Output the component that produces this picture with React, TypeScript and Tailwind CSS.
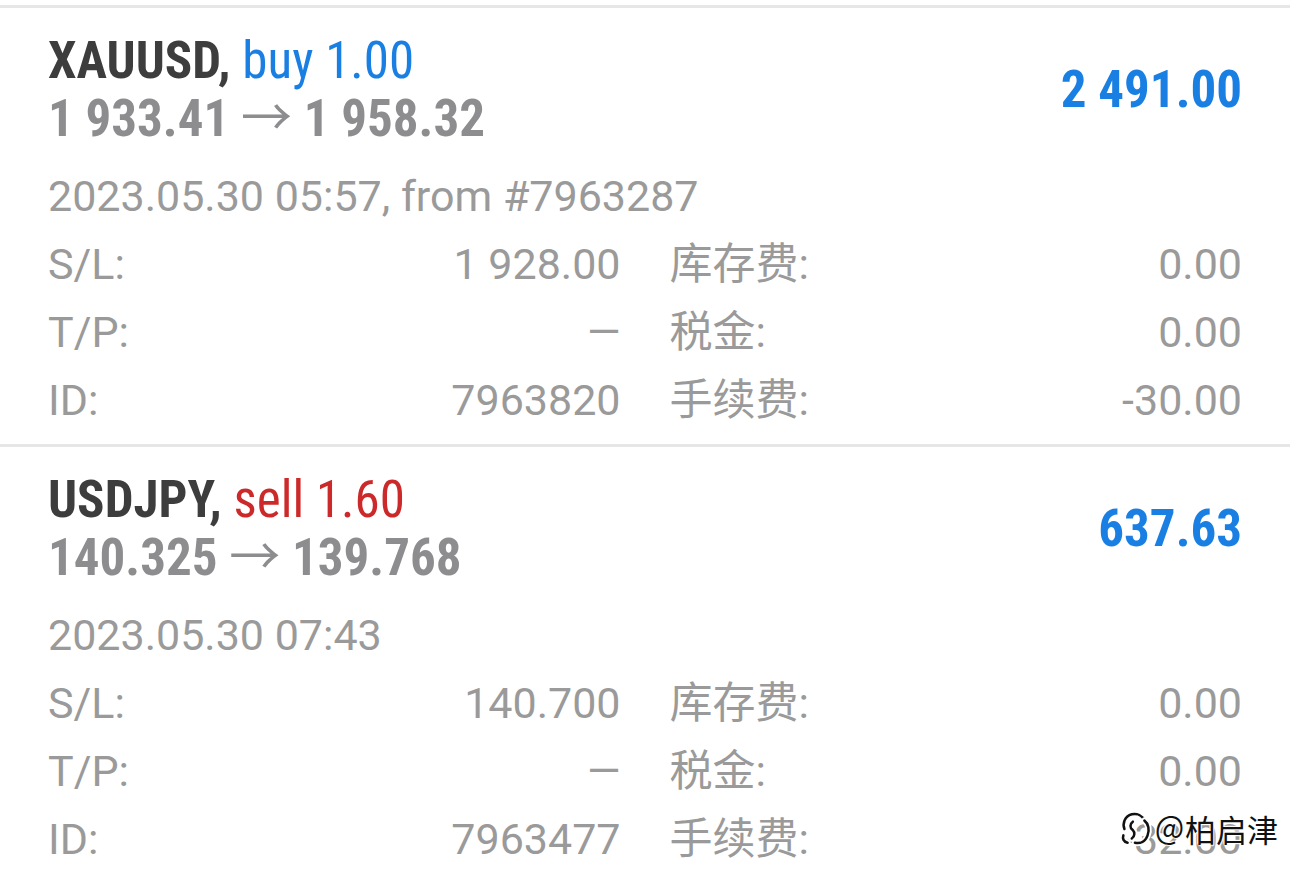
import React from "react";

const cond = { fontFamily: "'Roboto Condensed', 'Liberation Sans Narrow', 'DejaVu Sans Condensed', Roboto, sans-serif" };
const body = { fontFamily: "Roboto, 'Noto Sans CJK SC', sans-serif" };
const arrow = { fontFamily: "'Noto Sans CJK SC', sans-serif" };

interface Deal {
  symbol: string;
  side: "buy" | "sell";
  volume: string;
  open: string;
  close: string;
  profit: string;
  time: string;
  sl: string;
  tp: string;
  id: string;
  swap: string;
  tax: string;
  fee: string;
}

const deals: Deal[] = [
  {
    symbol: "XAUUSD",
    side: "buy",
    volume: "1.00",
    open: "1 933.41",
    close: "1 958.32",
    profit: "2 491.00",
    time: "2023.05.30 05:57, from #7963287",
    sl: "1 928.00",
    tp: "—",
    id: "7963820",
    swap: "0.00",
    tax: "0.00",
    fee: "-30.00",
  },
  {
    symbol: "USDJPY",
    side: "sell",
    volume: "1.60",
    open: "140.325",
    close: "139.768",
    profit: "637.63",
    time: "2023.05.30 07:43",
    sl: "140.700",
    tp: "—",
    id: "7963477",
    swap: "0.00",
    tax: "0.00",
    fee: "-32.00",
  },
];

function Row({ label, value, label2, value2 }: { label: string; value: string; label2: string; value2: string }) {
  return (
    <div className="grid grid-cols-2 gap-x-[49px] leading-[68px] text-[43px] text-[#9a9a9a]">
      <div className="flex justify-between">
        <span>{label}</span>
        <span>{value}</span>
      </div>
      <div className="flex justify-between">
        <span>{label2}</span>
        <span>{value2}</span>
      </div>
    </div>
  );
}

function DealCard({ deal }: { deal: Deal }) {
  return (
    <div className="border-t-[3px] border-[#e6e6e6] px-12 pt-6 pb-[10px]" style={body}>
      <div className="flex items-center justify-between" style={cond}>
        <div className="font-bold text-[51px] leading-[57px]">
          <div className="h-[57px]">
            <span className="text-[#3d3d3d]">{deal.symbol},</span>{" "}
            <span className={deal.side === "buy" ? "font-normal text-[#1a7fe3]" : "font-normal text-[#cc2a2a]"}>
              {deal.side} {deal.volume}
            </span>
          </div>
          <div className="h-[57px] text-[#8d8d90]">
            {deal.open}{" "}
            <span className="font-normal leading-none" style={arrow}>→</span>{" "}
            {deal.close}
          </div>
        </div>
        <div className="mt-[2px] font-bold text-[51px] text-[#1a7fe3]">{deal.profit}</div>
      </div>
      <div className="mt-4 text-[43px] leading-[68px] text-[#9a9a9a]">{deal.time}</div>
      <Row label="S/L:" value={deal.sl} label2="库存费:" value2={deal.swap} />
      <Row label="T/P:" value={deal.tp} label2="税金:" value2={deal.tax} />
      <Row label="ID:" value={deal.id} label2="手续费:" value2={deal.fee} />
    </div>
  );
}

function Watermark() {
  return (
    <div className="absolute right-[12px] bottom-[34px] flex items-center">
      <svg width="36" height="40" viewBox="0 0 34 38" fill="none" stroke="#111" strokeWidth="2.4" strokeLinecap="round" strokeLinejoin="round">
        <path d="M9 33c-4-1-5-4-4-7M6 20c-2-5 0-12 7-14 5-1 10 1 12 6" stroke="#fff" strokeWidth="6" />
        <path d="M9 33c-4-1-5-4-4-7M6 20c-2-5 0-12 7-14 5-1 10 1 12 6" />
        <path d="M25 12c4 3 5 9 3 14-2 6-7 8-12 7" stroke="#fff" strokeWidth="6" />
        <path d="M25 12c4 3 5 9 3 14-2 6-7 8-12 7" />
        <path d="M14 13c-3 2-3 6 0 8 2 2 2 6-1 8" stroke="#fff" strokeWidth="6" />
        <path d="M14 13c-3 2-3 6 0 8 2 2 2 6-1 8" />
      </svg>
      <span
        className="text-[31px] leading-none text-[#111]"
        style={{ fontFamily: "'Noto Sans CJK SC', sans-serif", textShadow: "0 0 2px #fff, 0 0 2px #fff, 1px 1px 1px #fff, -1px -1px 1px #fff" }}
      >
        ＠柏启津
      </span>
    </div>
  );
}

export default function App() {
  return (
    <div className="relative h-[882px] w-[1290px] overflow-hidden bg-white pt-[5px]">
      {deals.map((d) => (
        <DealCard key={d.id} deal={d} />
      ))}
      <Watermark />
    </div>
  );
}
